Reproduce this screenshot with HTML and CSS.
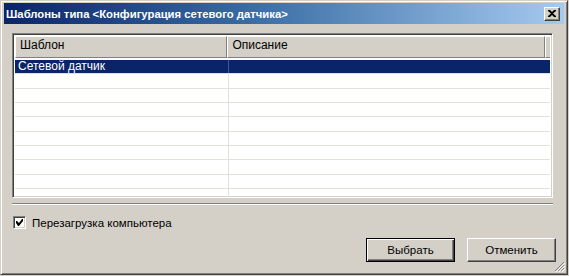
FILE: index.html
```html
<!DOCTYPE html>
<html lang="ru">
<head>
<meta charset="utf-8">
<link rel="stylesheet" href="styles.css">
</head>
<body>
<div class="window">
  <div class="titlebar">
    <span class="title">Шаблоны типа &lt;Конфигурация сетевого датчика&gt;</span>
    <span class="close">
      <svg width="8" height="7" viewBox="0 0 8 7"><path d="M0 0h2l2 2 2-2h2v1L5 3.5 8 6v1H6L4 5 2 7H0V6l3-2.5L0 1z" fill="#000"/></svg>
    </span>
  </div>
  <div class="content">
    <div class="list">
      <div class="header">
        <div class="hcell first">Шаблон</div>
        <div class="hcell second">Описание</div>
        <div class="hcell rest"></div>
      </div>
      <div class="rows">
        <div class="row selected"><div class="cell c1">Сетевой датчик</div><div class="cell c2"></div></div>
        <div class="row"><div class="cell c1"></div><div class="cell c2"></div></div>
        <div class="row"><div class="cell c1"></div><div class="cell c2"></div></div>
        <div class="row"><div class="cell c1"></div><div class="cell c2"></div></div>
        <div class="row"><div class="cell c1"></div><div class="cell c2"></div></div>
        <div class="row"><div class="cell c1"></div><div class="cell c2"></div></div>
        <div class="row"><div class="cell c1"></div><div class="cell c2"></div></div>
        <div class="row"><div class="cell c1"></div><div class="cell c2"></div></div>
        <div class="row"><div class="cell c1"></div><div class="cell c2"></div></div>
        <div class="row"><div class="cell c1"></div><div class="cell c2"></div></div>
      </div>
    </div>
    <div class="separator"></div>
    <label class="check">
      <span class="box"><svg width="7" height="7" viewBox="0 0 7 7"><path d="M0 2h1l2 2 3-4h1v2L3 7H2L0 4z" fill="#000"/></svg></span>
      <span>Перезагрузка компьютера</span>
    </label>
    <div class="buttons">
      <button class="btn default">Выбрать</button>
      <button class="btn">Отменить</button>
    </div>
  </div>
  <div class="grip">
    <svg width="11" height="11" viewBox="0 0 11 11">
      <path d="M10 1L1 10M10 4L4 10M10 7L7 10" stroke="#808080" stroke-width="1"/>
      <path d="M11 2L2 11M11 5L5 11M11 8L8 11" stroke="#fff" stroke-width="1"/>
    </svg>
  </div>
</div>
</body>
</html>
```
FILE: styles.css
```css
html, body {
  margin: 0;
  padding: 0;
  background: #d4d0c8;
}
.window {
  position: relative;
  width: 568px;
  height: 275px;
  box-sizing: border-box;
  background: #d4d0c8;
  border-top: 1px solid #d4d0c8;
  border-left: 1px solid #d4d0c8;
  border-right: 1px solid #404040;
  border-bottom: 1px solid #404040;
  box-shadow: inset 1px 1px 0 #fff, inset -1px -1px 0 #808080;
  padding: 2px 3px 3px 3px;
  font-family: "Liberation Sans", sans-serif;
  font-size: 12px;
  color: #000;
  display: flex;
  flex-direction: column;
}
.titlebar {
  height: 21px;
  background: linear-gradient(to right, #0a246a 0%, #3a6ea5 45%, #a6caf0 100%);
  display: flex;
  align-items: center;
  justify-content: space-between;
  padding: 0 4px 0 2px;
}
.title {
  color: #fff;
  font-family: "Liberation Sans", sans-serif;
  font-weight: bold;
  font-size: 11.3px;
}
.close {
  width: 16px;
  height: 14px;
  box-sizing: border-box;
  background: #d4d0c8;
  border-top: 1px solid #fff;
  border-left: 1px solid #fff;
  border-right: 1px solid #404040;
  border-bottom: 1px solid #404040;
  box-shadow: inset -1px -1px 0 #808080;
  display: flex;
  align-items: center;
  justify-content: center;
}
.content {
  flex: 1;
  display: flex;
  flex-direction: column;
  padding: 9px 11px 0 8px;
}
.list {
  height: 165px;
  box-sizing: border-box;
  border-top: 1px solid #808080;
  border-left: 1px solid #808080;
  border-right: 1px solid #fff;
  border-bottom: 1px solid #fff;
  box-shadow: inset 1px 1px 0 #404040, inset -1px -1px 0 #d4d0c8;
  padding: 2px;
  background: #fff;
  overflow: hidden;
}
.header {
  display: flex;
  height: 22px;
  background: #d4d0c8;
}
.hcell {
  box-sizing: border-box;
  height: 22px;
  line-height: 17px;
  padding-left: 4px;
  border-top: 1px solid #fff;
  border-left: 1px solid #fff;
  border-right: 1px solid #808080;
  border-bottom: 1px solid #808080;
}
.hcell.first { width: 214px; }
.hcell.second { width: 320px; }
.hcell.rest { flex: 1; border-right: none; }
.rows {
  padding-top: 2px;
}
.row {
  display: flex;
  height: 14.33px;
  box-sizing: border-box;
  border-bottom: 1px solid #e2e1dc;
}
.cell {
  height: 100%;
  box-sizing: border-box;
  line-height: 13px;
  padding-left: 3px;
  white-space: nowrap;
}
.c1 { width: 214px; border-right: 1px solid #e2e1dc; }
.c2 { width: 320px; }
.row.selected {
  background: #0a246a;
  color: #fff;
  border-bottom-color: #d6e0f0;
}
.row.selected .c1 { border-right-color: #3b5a98; }
.separator {
  margin-top: 5px;
  height: 0;
  border-top: 1px solid #808080;
  border-bottom: 1px solid #fff;
}
.check {
  display: flex;
  align-items: center;
  gap: 6px;
  margin-top: 11px;
  margin-left: 1px;
  font-size: 11.5px;
}
.box {
  width: 13px;
  height: 13px;
  box-sizing: border-box;
  background: #fff;
  border-top: 1px solid #808080;
  border-left: 1px solid #808080;
  border-right: 1px solid #fff;
  border-bottom: 1px solid #fff;
  box-shadow: inset 1px 1px 0 #404040, inset -1px -1px 0 #d4d0c8;
  display: flex;
  align-items: center;
  justify-content: center;
}
.buttons {
  display: flex;
  justify-content: flex-end;
  gap: 12px;
  margin-top: 9px;
  margin-right: -3px;
}
.btn {
  width: 89px;
  height: 24px;
  box-sizing: border-box;
  font-family: "Liberation Sans", sans-serif;
  font-size: 11.5px;
  color: #000;
  background: #d4d0c8;
  border-top: 1px solid #fff;
  border-left: 1px solid #fff;
  border-right: 1px solid #404040;
  border-bottom: 1px solid #404040;
  box-shadow: inset -1px -1px 0 #808080;
  padding: 0;
}
.btn.default {
  border: 1px solid #000;
  box-shadow: inset 1px 1px 0 #fff, inset -1px -1px 0 #404040, inset -2px -2px 0 #808080;
}
.grip {
  position: absolute;
  right: 2px;
  bottom: 2px;
  width: 11px;
  height: 11px;
}
```
